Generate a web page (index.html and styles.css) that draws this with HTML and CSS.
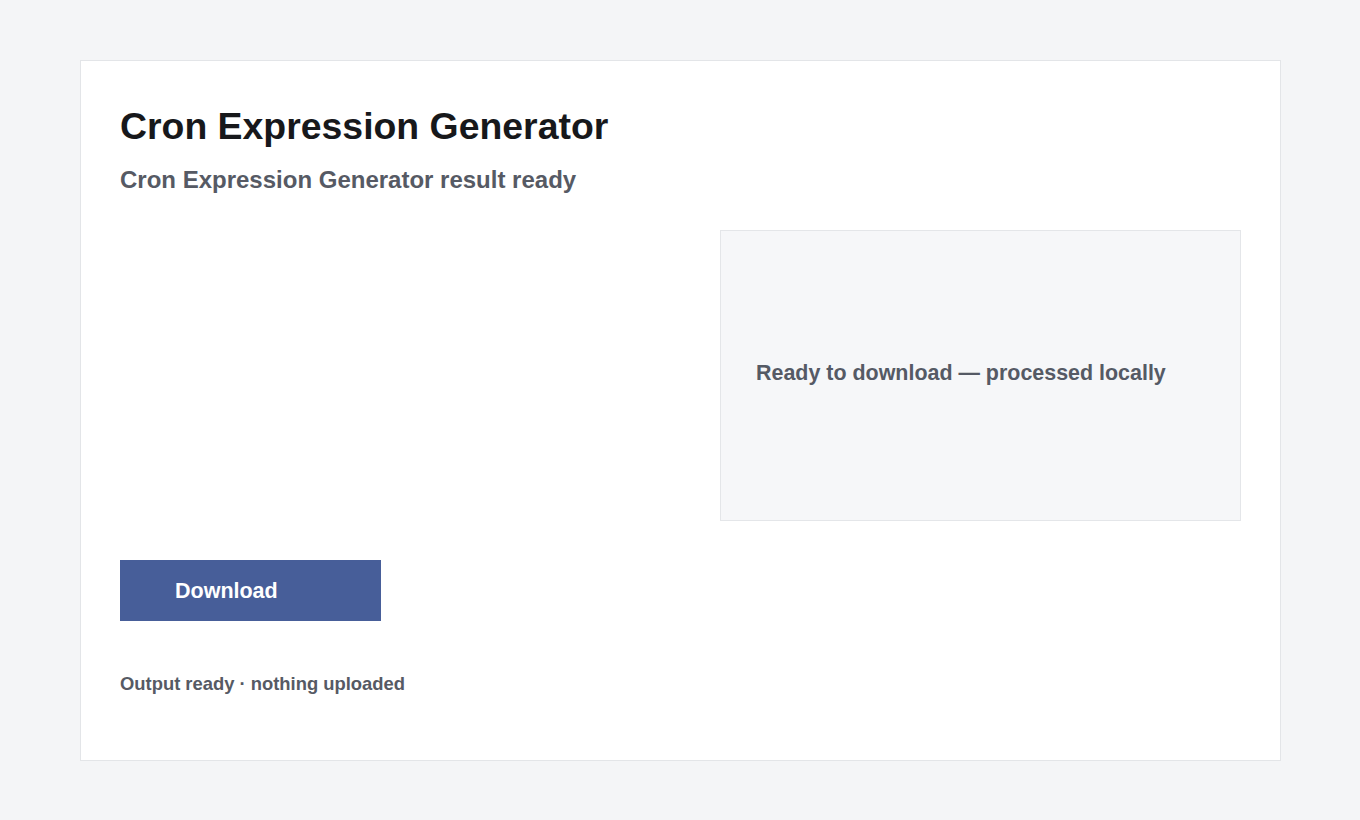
FILE: index.html
```html
<!DOCTYPE html>
<html lang="en">
<head>
<meta charset="utf-8">
<title>Cron Expression Generator</title>
<link rel="stylesheet" href="styles.css">
</head>
<body>
<main class="card">
  <h1 class="title">Cron Expression Generator</h1>
  <p class="subtitle">Cron Expression Generator result ready</p>
  <section class="grid">
    <div class="left"></div>
    <div class="preview">
      <p class="preview-text">Ready to download — processed locally</p>
    </div>
  </section>
  <button class="btn" type="button">Download</button>
  <p class="footer">Output ready · nothing uploaded</p>
</main>
</body>
</html>
```

FILE: styles.css
```css
* { box-sizing: border-box; }
html, body { margin: 0; padding: 0; }
body {
  background: #f4f5f7;
  font-family: "Liberation Sans", Arial, sans-serif;
  padding: 60px 80px;
}
.card {
  background: #ffffff;
  border: 1px solid #e3e5e8;
  width: 1201px;
  height: 701px;
  padding: 39px 39px 0 39px;
}
.title {
  margin: 4px 0 0 0;
  font-size: 37.4px;
  line-height: 44px;
  font-weight: 700;
  color: #17181b;
}
.subtitle {
  margin: 17px 0 0 0;
  font-size: 24px;
  line-height: 30px;
  font-weight: 700;
  color: #565a64;
}
.grid {
  margin-top: 35px;
  display: grid;
  grid-template-columns: 1fr 521px;
  column-gap: 80px;
}
.preview {
  height: 291px;
  background: #f6f7f9;
  border: 1px solid #e4e6e9;
  display: flex;
  align-items: center;
  padding: 0 35px 6px 35px;
}
.preview-text {
  margin: 0;
  font-size: 21.45px;
  line-height: 28px;
  font-weight: 700;
  color: #555a65;
}
.btn {
  display: block;
  margin-top: 39px;
  width: 261px;
  height: 61px;
  border: 0;
  border-radius: 0;
  background: #475e99;
  color: #ffffff;
  font-family: inherit;
  font-size: 21.5px;
  font-weight: 700;
  text-align: left;
  padding: 2px 0 0 55px;
}
.footer {
  margin: 51px 0 0 0;
  font-size: 18.4px;
  line-height: 24px;
  font-weight: 700;
  color: #565a64;
}
```
